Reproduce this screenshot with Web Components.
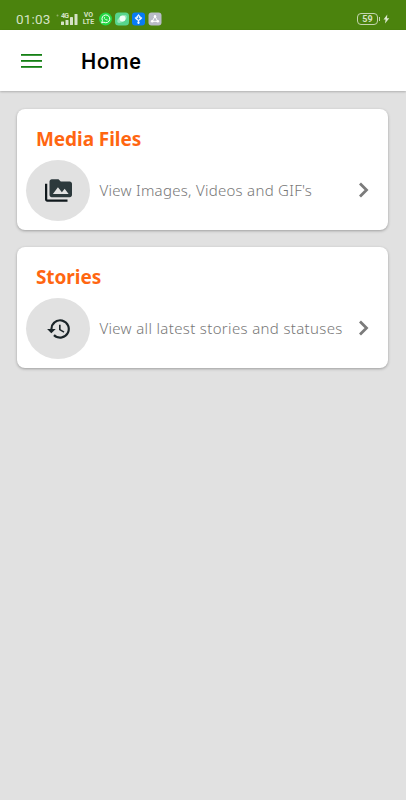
<!DOCTYPE html>
<html lang="en">
<head>
<meta charset="utf-8">
<title>Home</title>
<style>
  html, body { margin: 0; height: 100%; }
  body { background: #e1e1e1; font-family: Roboto, "Liberation Sans", sans-serif; }
</style>
</head>
<body>
<home-page></home-page>
<script>
class BaseElement extends HTMLElement {
  constructor() {
    super();
    this.attachShadow({ mode: "open" });
  }

  connectedCallback() {
    const template = document.createElement("template");
    template.innerHTML = this.render();
    this.shadowRoot.replaceChildren(template.content);
  }
}

class StatusBar extends BaseElement {
  render() {
    return `
      <style>
        :host {
          display: flex;
          box-sizing: border-box;
          height: 30px;
          padding: 9px 16px 0 16px;
          align-items: flex-start;
          background: #4b830d;
          color: #d5e2c5;
        }
        svg { display: block; flex: none; }
        .time { width: 40px; font-size: 13.5px; line-height: 21px; letter-spacing: 0.15px; }
        .signal { margin-top: 3px; }
        .volte {
          display: flex;
          flex-direction: column;
          width: 13px;
          margin: 3px 4px 0 2px;
          font-size: 7px;
          font-weight: 700;
          line-height: 7px;
          text-align: center;
        }
        .apps { display: flex; gap: 3px; margin-top: 3px; }
        .battery { display: flex; align-items: center; gap: 5px; margin: 4px 0 0 auto; }
        .level {
          position: relative;
          box-sizing: border-box;
          width: 21px;
          height: 12px;
          border: 1px solid #c3d5ae;
          border-radius: 4px;
          font-size: 9px;
          font-weight: 700;
          line-height: 10px;
          text-align: center;
        }
        .level::after {
          content: "";
          position: absolute;
          right: -3px;
          top: 3px;
          width: 1px;
          height: 4px;
          background: #c3d5ae;
        }
      </style>
      <span class="time">01:03</span>
      <svg class="signal" width="24" height="14" viewBox="0 0 24 14" fill="#d5e2c5">
        <circle cx="1.5" cy="3.5" r="1" fill="#8eaf66"/>
        <text x="5" y="6" font-size="7" font-weight="700" textLength="8">4G</text>
        <rect x="5" y="9.5" width="3" height="3.5" rx=".6"/>
        <rect x="9.5" y="8" width="3" height="5" rx=".6"/>
        <rect x="14" y="5" width="3" height="8" rx=".6"/>
        <rect x="18.5" y="2" width="3" height="11" rx=".6"/>
      </svg>
      <div class="volte"><span>VO</span><span>LTE</span></div>
      <div class="apps">
        <svg width="13" height="14" viewBox="0 0 13 14">
          <circle cx="6.5" cy="7" r="6.5" fill="#25d644"/>
          <path d="M2.7 10.9l.7-2.3a3.9 3.9 0 1 1 1.5 1.6z" fill="none" stroke="#fff"/>
          <path d="M5.2 5.1c-.7 1.4 1.7 3.9 3.2 3.4l.3-.7-1.1-.6-.5.5c-.8-.3-1.2-.8-1.5-1.4l.4-.5-.4-.9z" fill="#fff"/>
        </svg>
        <svg width="14" height="14" viewBox="0 0 14 14">
          <rect y=".5" width="14" height="13" rx="3.5" fill="#57d58c"/>
          <ellipse cx="7" cy="7" rx="5.5" ry="2.8" transform="rotate(-35 7 7)" fill="#9ae7bb"/>
          <circle cx="7.5" cy="6.5" r="3" fill="#effff5"/>
        </svg>
        <svg width="13" height="14" viewBox="0 0 13 14">
          <rect y=".5" width="13" height="13" rx="3" fill="#087cf5"/>
          <path d="M6.5 2 8.2 4.2 10.4 6 8.7 7.7 7.2 8.7v1a1.2 1.2 0 1 1-1.4 0v-1L4.3 7.7 2.6 6l2.2-1.8z" fill="#e9f5ff"/>
          <path d="M6.5 4.3v3.2M5 5.8l1.5 1.5L8 5.8" fill="none" stroke="#087cf5" stroke-width=".8"/>
        </svg>
        <svg width="14" height="14" viewBox="0 0 14 14">
          <rect x=".5" y=".5" width="13" height="13" rx="3" fill="#b9bcc7"/>
          <path d="M7 4.5 4.2 9.3h5.6z" fill="none" stroke="#fff"/>
          <g fill="#fff"><circle cx="7" cy="4.3" r="1.2"/><circle cx="4.2" cy="9.3" r="1.3"/><circle cx="9.8" cy="9.3" r="1.3"/></g>
        </svg>
      </div>
      <div class="battery">
        <span class="level">59</span>
        <svg width="7" height="10" viewBox="0 0 7 10"><path d="M4.3.5.5 5.6h2.1L2 9.5l4.3-5.2H4z" fill="#dce7cf"/></svg>
      </div>
    `;
  }
}

class AppBar extends BaseElement {
  render() {
    return `
      <style>
        :host {
          display: flex;
          align-items: center;
          box-sizing: border-box;
          height: 61px;
          padding-left: 21px;
          background: #fff;
          box-shadow: 0 1px 2px rgba(0, 0, 0, 0.22);
        }
        svg { display: block; }
        h1 { margin: 2px 0 0 39px; font-size: 21.5px; font-weight: 480; line-height: 26px; letter-spacing: 0.7px; color: #000; }
      </style>
      <svg width="21" height="16" viewBox="0 0 21 16" fill="#158015">
        <rect y="1" width="21" height="1.8"/><rect y="7" width="21" height="1.8"/><rect y="13" width="21" height="1.8"/>
      </svg>
      <h1><slot></slot></h1>
    `;
  }
}

class MenuCard extends BaseElement {
  render() {
    return `
      <style>
        :host {
          display: block;
          box-sizing: border-box;
          height: 121px;
          padding: 17px 18px 0 9px;
          border-radius: 8px;
          background: #fff;
          box-shadow: 0 1px 3px rgba(0, 0, 0, 0.3);
        }
        h2 {
          margin: 0 0 7px 9.5px;
          font: 700 19px/27px "Noto Sans", sans-serif;
          letter-spacing: -0.05px;
          color: #ff6611;
        }
        .row { display: flex; align-items: center; }
        .icon {
          display: flex;
          align-items: center;
          justify-content: center;
          flex: none;
          width: 64px;
          height: 61px;
          border-radius: 50%;
          background: #e1e1e1;
        }
        p {
          flex: 1;
          margin: -1px 0 0 9px;
          font: 300 15px/22px "Noto Sans", "Open Sans", sans-serif;
          letter-spacing: var(--text-spacing, 0.3px);
          white-space: nowrap;
          color: #777;
        }
        .chevron { display: block; flex: none; margin-top: -1px; }
      </style>
      <h2><slot name="title"></slot></h2>
      <div class="row">
        <span class="icon"><slot name="icon"></slot></span>
        <p><slot></slot></p>
        <svg class="chevron" width="14" height="16" viewBox="0 0 14 16"><path d="M4 1.5 10.5 8 4 14.500" fill="none" stroke="#7b7b7b" stroke-width="2.8"/></svg>
      </div>
    `;
  }
}

class HomePage extends BaseElement {
  render() {
    return `
      <style>
        :host { display: block; }
        main { display: flex; flex-direction: column; gap: 17px; padding: 18px 18px 18px 17.4px; }
        .media { --text-spacing: 0.28px; }
        .stories { --text-spacing: 0.34px; }
        svg { display: block; margin-left: 1px; }
      </style>
      <status-bar></status-bar>
      <app-bar>Home</app-bar>
      <main>
        <menu-card class="media">
          <span slot="title">Media Files</span>
          <svg slot="icon" width="27" height="27" viewBox="0 0 24 24">
            <path d="M2 6H0v14c0 1.1.9 2 2 2h18v-2H2z" fill="#10191d"/>
            <path d="M22 4h-8l-2-2H6C4.9 2 4 2.9 4 4v12c0 1.1.9 2 2 2h16c1.1 0 2-.9 2-2V6c0-1.1-.9-2-2-2zM7 15l4.5-6 3.5 4.51 2.5-3.01L21 15z" fill="#2c393c"/>
          </svg>
          View Images, Videos and GIF's
        </menu-card>
        <menu-card class="stories">
          <span slot="title">Stories</span>
          <svg slot="icon" width="26" height="26" viewBox="0 0 24 24" fill="#1b2529">
            <path d="M13 3a9 9 0 0 0-9 9H1l3.89 3.89.07.14L9 12H6a7 7 0 1 1 2.06 4.94l-1.42 1.42A9 9 0 1 0 13 3zm-1 5v5l4.28 2.54.72-1.21-3.5-2.08V8z"/>
          </svg>
          View all latest stories and statuses
        </menu-card>
      </main>
    `;
  }
}

customElements.define("status-bar", StatusBar);
customElements.define("app-bar", AppBar);
customElements.define("menu-card", MenuCard);
customElements.define("home-page", HomePage);
</script>
</body>
</html>
